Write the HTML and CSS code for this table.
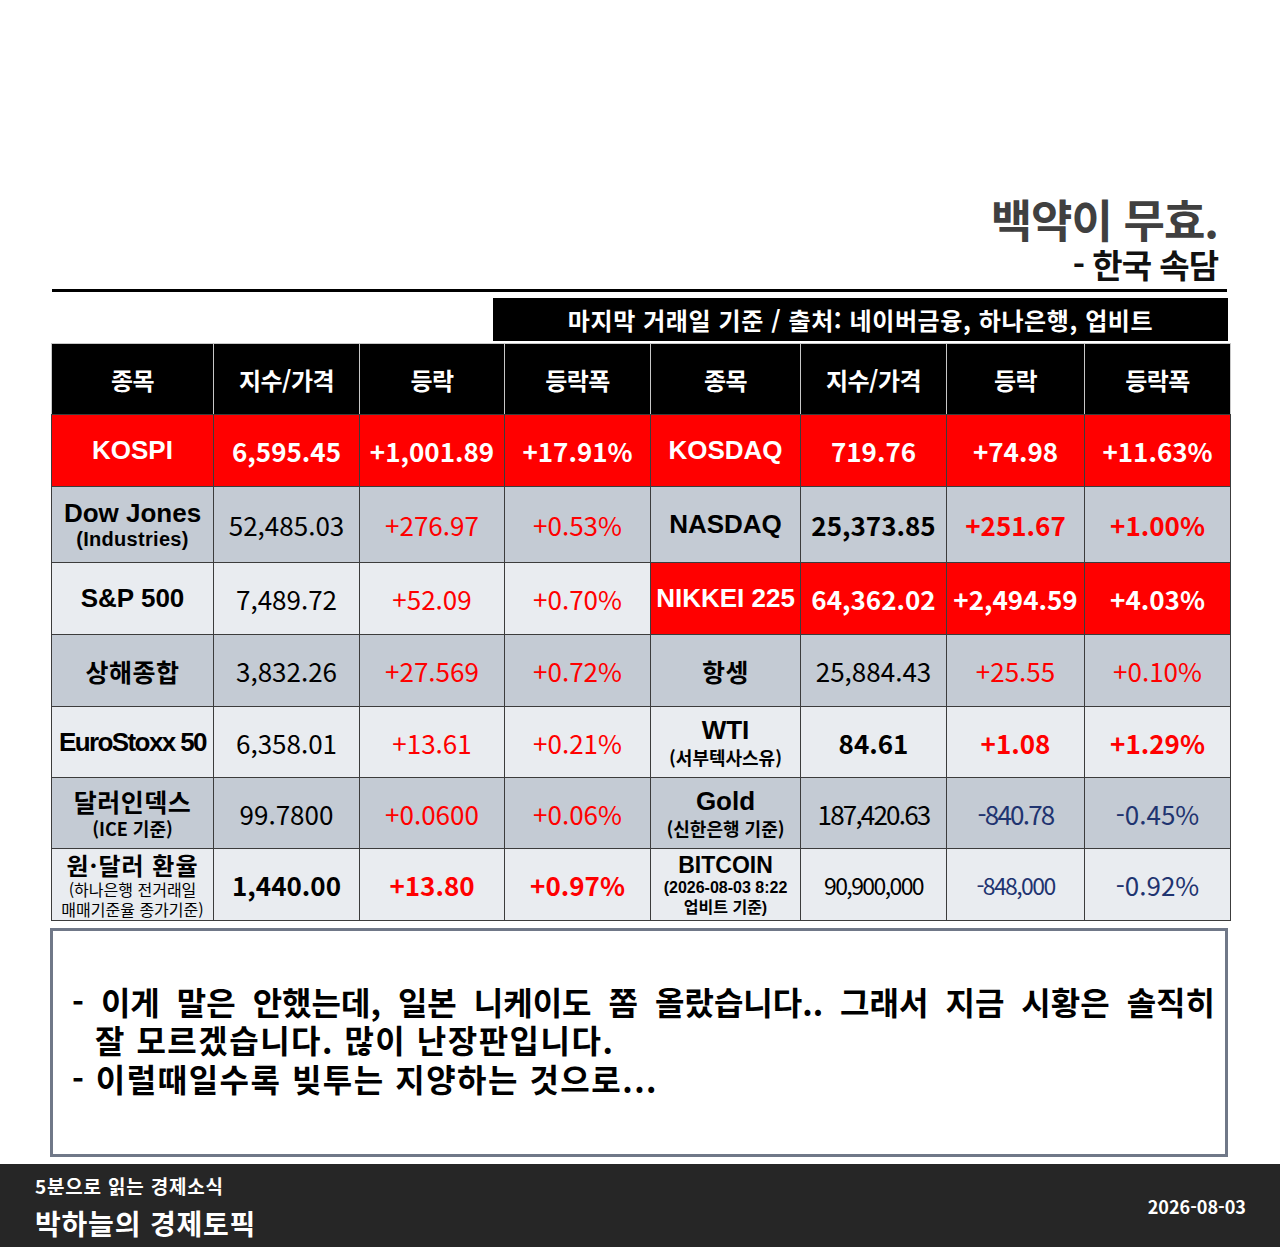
FILE: index.html
```html
<!DOCTYPE html>
<html lang="ko">
<head>
<meta charset="utf-8">
<title>박하늘의 경제토픽</title>
<link rel="stylesheet" href="styles.css">
</head>
<body>
<div class="page">
  <header class="head">
    <div class="title">백약이 무효.</div>
    <div class="subtitle">- 한국 속담</div>
  </header>
  <div class="rule"></div>
  <div class="source-row">
    <div class="source">마지막 거래일 기준 / 출처: 네이버금융, 하나은행, 업비트</div>
  </div>
  <table class="market">
    <colgroup>
      <col class="c1"><col class="c2"><col class="c3"><col class="c4">
      <col class="c5"><col class="c6"><col class="c7"><col class="c8">
    </colgroup>
    <tr class="r-head">
      <th>종목</th><th>지수/가격</th><th>등락</th><th>등락폭</th>
      <th>종목</th><th>지수/가격</th><th>등락</th><th>등락폭</th>
    </tr>
    <tr class="r-kospi hot">
      <td class="name lat">KOSPI</td><td class="bnum">6,595.45</td><td class="bnum">+1,001.89</td><td class="bnum">+17.91%</td>
      <td class="name lat">KOSDAQ</td><td class="bnum">719.76</td><td class="bnum">+74.98</td><td class="bnum">+11.63%</td>
    </tr>
    <tr class="r-dow dark">
      <td class="name lat"><div class="l1">Dow Jones</div><div class="sub-lat">(Industries)</div></td>
      <td class="num">52,485.03</td><td class="num up">+276.97</td><td class="num up">+0.53%</td>
      <td class="name lat">NASDAQ</td><td class="bnum">25,373.85</td><td class="bnum up">+251.67</td><td class="bnum up">+1.00%</td>
    </tr>
    <tr class="r-sp light">
      <td class="name lat">S&amp;P 500</td><td class="num">7,489.72</td><td class="num up">+52.09</td><td class="num up">+0.70%</td>
      <td class="name lat red-cell">NIKKEI 225</td><td class="bnum red-cell">64,362.02</td><td class="bnum red-cell">+2,494.59</td><td class="bnum red-cell">+4.03%</td>
    </tr>
    <tr class="r-sh dark">
      <td class="name kr">상해종합</td><td class="num">3,832.26</td><td class="num up">+27.569</td><td class="num up">+0.72%</td>
      <td class="name kr">항셍</td><td class="num">25,884.43</td><td class="num up">+25.55</td><td class="num up">+0.10%</td>
    </tr>
    <tr class="r-euro light">
      <td class="name lat euro">EuroStoxx 50</td><td class="num">6,358.01</td><td class="num up">+13.61</td><td class="num up">+0.21%</td>
      <td class="name lat"><div class="l1">WTI</div><div class="sub-kr">(서부텍사스유)</div></td>
      <td class="bnum">84.61</td><td class="bnum up">+1.08</td><td class="bnum up">+1.29%</td>
    </tr>
    <tr class="r-dxy dark">
      <td class="name kr"><div class="l1">달러인덱스</div><div class="sub-kr">(ICE 기준)</div></td>
      <td class="num">99.7800</td><td class="num up">+0.0600</td><td class="num up">+0.06%</td>
      <td class="name lat"><div class="l1">Gold</div><div class="sub-kr">(신한은행 기준)</div></td>
      <td class="num cond">187,420.63</td><td class="num cond down">-840.78</td><td class="num down">-0.45%</td>
    </tr>
    <tr class="r-krw light">
      <td class="name kr krw">
        <div class="l1">원·달러 환율</div>
        <div class="sub-small">(하나은행 전거래일</div>
        <div class="sub-small">매매기준율 종가기준)</div>
      </td>
      <td class="bnum">1,440.00</td><td class="bnum up">+13.80</td><td class="bnum up">+0.97%</td>
      <td class="name lat btc">
        <div class="l1">BITCOIN</div>
        <div class="sub-btc">(2026-08-03 8:22</div>
        <div class="sub-btc">업비트 기준)</div>
      </td>
      <td class="num small-cond">90,900,000</td><td class="num small-cond down">-848,000</td><td class="num down">-0.92%</td>
    </tr>
  </table>
  <section class="note">
    <div class="note-body">
      <div class="line just">- 이게 말은 안했는데, 일본 니케이도 쫌 올랐습니다.. 그래서 지금 시황은 솔직히</div>
      <div class="line spaced indent">잘 모르겠습니다. 많이 난장판입니다.</div>
      <div class="line spaced">- 이럴때일수록 빚투는 지양하는 것으로...</div>
    </div>
  </section>
</div>
<footer class="footer">
  <div class="brand">
    <div class="brand-top">5분으로 읽는 경제소식</div>
    <div class="brand-name">박하늘의 경제토픽</div>
  </div>
  <div class="date">2026-08-03</div>
</footer>
</body>
</html>
```

FILE: styles.css
```css
html, body {
  margin: 0;
  padding: 0;
  background: #ffffff;
}
body {
  width: 1280px;
  height: 1247px;
  font-family: "Noto Sans CJK KR", sans-serif;
  color: #000;
  display: flex;
  flex-direction: column;
}
.page {
  margin-left: 51px;
  width: 1179px;
  padding-top: 193px;
  flex: 1;
}
.head {
  text-align: right;
  padding-right: 12px;
  font-weight: 700;
}
.title {
  font-size: 45px;
  line-height: 52px;
  color: #404040;
  letter-spacing: -1px;
}
.subtitle {
  font-size: 33px;
  line-height: 38px;
  color: #111;
  letter-spacing: -1px;
}
.rule {
  height: 3px;
  background: #000;
  margin: 6px 3px 0 1px;
}
.source-row {
  display: flex;
  justify-content: flex-end;
  padding-right: 2px;
  margin-top: 6px;
}
.source {
  width: 735px;
  height: 43px;
  background: #000;
  color: #fff;
  font-weight: 700;
  font-size: 24px;
  letter-spacing: 0.6px;
  display: flex;
  align-items: center;
  justify-content: center;
}
.market {
  margin-top: 2px;
  width: 1179px;
  border-collapse: collapse;
  table-layout: fixed;
}
.c1 { width: 162px; }
.c2 { width: 146px; }
.c3 { width: 145px; }
.c4 { width: 146px; }
.c5 { width: 150px; }
.c6 { width: 146px; }
.c7 { width: 138px; }
.c8 { width: 146px; }
.market th, .market td {
  border: 1px solid #3c3c3c;
  padding: 0;
  text-align: center;
  vertical-align: middle;
  white-space: nowrap;
}
.r-head { height: 71px; }
.r-kospi { height: 72px; }
.r-dow { height: 76px; }
.r-sp { height: 72px; }
.r-sh { height: 72px; }
.r-euro { height: 71px; }
.r-dxy { height: 71px; }
.r-krw { height: 72px; }
.market th {
  background: #000;
  color: #fff;
  font-size: 24px;
  font-weight: 700;
  border-color: #c8c8c8;
  border-bottom-color: #3c3c3c;
  letter-spacing: -0.5px;
}
.light td { background: #e9ecf0; }
.dark td { background: #c4cbd4; }
.hot td { background: #ff0000; color: #fff; }
.market td.red-cell { background: #ff0000; color: #fff; }
.name { font-weight: 700; }
.lat {
  font-family: "Liberation Sans", "Noto Sans CJK KR", sans-serif;
  font-size: 26px;
}
.kr {
  font-family: "Noto Sans CJK KR", sans-serif;
  font-size: 25px;
  letter-spacing: 0.5px;
}
.euro { letter-spacing: -1.6px; }
.l1 { line-height: 29px; }
.sub-lat {
  font-size: 20px;
  line-height: 22px;
  letter-spacing: 0.3px;
}
.sub-kr {
  font-family: "Noto Sans CJK KR", sans-serif;
  font-size: 18px;
  line-height: 24px;
  font-weight: 700;
  letter-spacing: 0;
}
.krw .l1 {
  font-size: 24px;
  line-height: 28px;
  letter-spacing: 1px;
}
.sub-small {
  font-size: 16px;
  line-height: 20px;
  font-weight: 400;
  letter-spacing: 0;
}
.btc .l1 {
  font-size: 23px;
  line-height: 26px;
}
.sub-btc {
  font-size: 16px;
  line-height: 20px;
}
.num {
  font-family: "Noto Sans CJK KR", sans-serif;
  font-size: 26px;
  font-weight: 400;
}
.bnum {
  font-family: "Noto Sans CJK KR", sans-serif;
  font-size: 26px;
  font-weight: 700;
}
.up { color: #ff0000; }
.down { color: #1f3470; }
.cond { letter-spacing: -1.8px; }
.small-cond { font-size: 23px; letter-spacing: -1.6px; }
.note {
  margin-top: 7px;
  margin-left: -1px;
  width: 1178px;
  height: 229px;
  box-sizing: border-box;
  border: 3px solid #707888;
  display: flex;
  align-items: center;
  padding: 0 10px 6px 19px;
}
.note-body {
  width: 100%;
  font-size: 32px;
  font-weight: 700;
  line-height: 38.5px;
}
.line { white-space: nowrap; }
.spaced { letter-spacing: 1.5px; }
.just {
  white-space: normal;
  text-align: justify;
  text-align-last: justify;
}
.indent { padding-left: 23px; }
.footer {
  height: 83px;
  background: #262626;
  color: #fff;
  display: flex;
  justify-content: space-between;
  align-items: flex-start;
  font-weight: 700;
}
.brand { padding: 9px 0 0 35px; }
.brand-top {
  font-size: 19px;
  line-height: 26px;
  letter-spacing: 0.8px;
}
.brand-name {
  font-size: 28px;
  line-height: 48px;
  letter-spacing: 0.8px;
}
.date {
  font-size: 18px;
  line-height: 24px;
  padding: 30px 34px 0 0;
}
```
